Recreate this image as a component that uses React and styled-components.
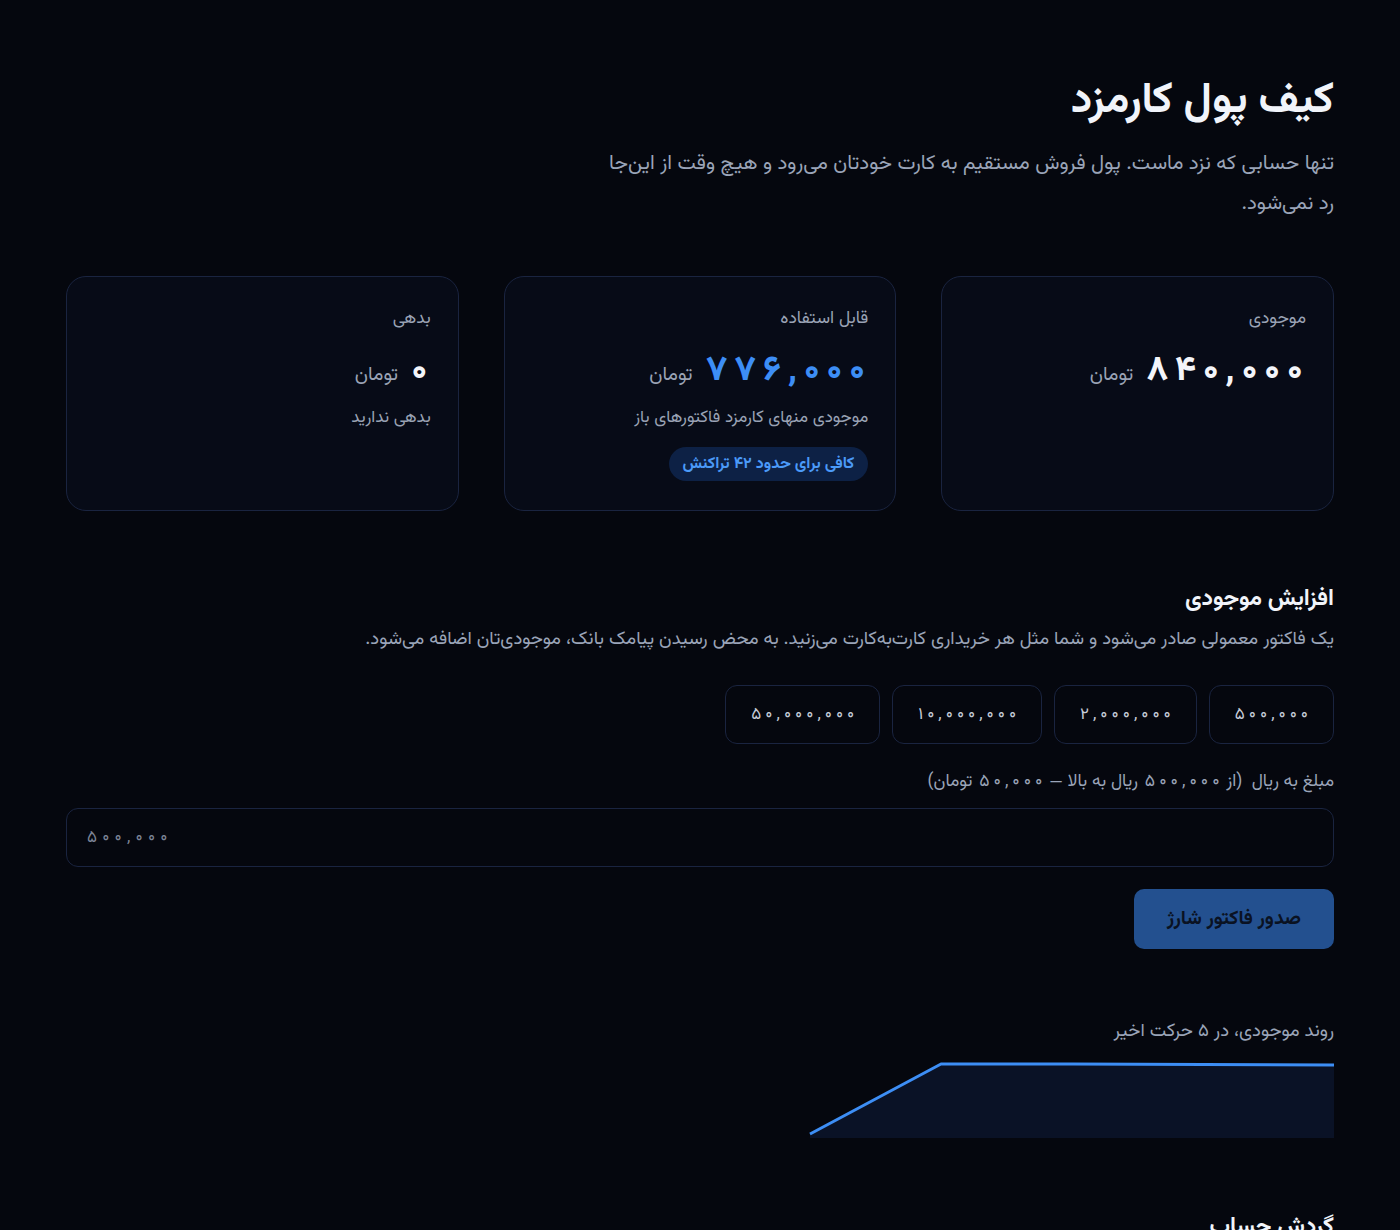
import React from "react";
import styled, { createGlobalStyle } from "styled-components";

const Global = createGlobalStyle`
  html, body { margin: 0; padding: 0; background: #05070e; }
  body {
    font-family: "Vazirmatn", "Noto Sans Arabic", "DejaVu Sans", "Noto Sans", sans-serif;
    color: #e8ecf4;
  }
  * { box-sizing: border-box; }
`;

const Page = styled.div`
  direction: rtl;
  width: 1268px;
  margin: 0 auto;
  padding-top: 76px;
  min-height: 1230px;
`;

const Title = styled.h1`
  margin: 0;
  font-size: 43px;
  font-weight: 700;
  color: #f1f4fa;
  line-height: 52px;
`;

const Lead = styled.p`
  margin: 16px 0 0;
  max-width: 745px;
  font-size: 20.5px;
  line-height: 40px;
  color: #9aa4b8;
`;

const Cards = styled.div`
  display: grid;
  grid-template-columns: repeat(3, 1fr);
  gap: 45px;
  margin-top: 52px;
`;

const Card = styled.div`
  background: #070b17;
  border: 1px solid #1a2440;
  border-radius: 20px;
  padding: 29px 27px 28px;
  min-height: 235px;
  display: flex;
  flex-direction: column;
  align-items: flex-start;
`;

const CardLabel = styled.div`
  font-size: 17.5px;
  color: #9aa3b5;
  line-height: 26px;
`;

const ValueRow = styled.div`
  display: flex;
  align-items: baseline;
  gap: 10px;
  margin-top: 18px;
  line-height: 44px;
`;

const Amount = styled.span`
  font-size: 35px;
  font-weight: 800;
  color: ${(p) => (p.$accent ? "#3d8ef5" : "#f3f5fa")};
`;

const Unit = styled.span`
  font-size: 19.5px;
  color: #9aa3b5;
`;

const CardNote = styled.div`
  margin-top: 8px;
  font-size: 17px;
  line-height: 26px;
  color: #9aa3b5;
`;

const Pill = styled.div`
  margin-top: 16px;
  height: 34px;
  padding: 0 14px;
  display: flex;
  align-items: center;
  border-radius: 999px;
  background: #0d2145;
  color: #4b9af8;
  font-size: 16px;
  font-weight: 700;
`;

const Ch = styled.span`
  display: inline-block;
  margin: 0 ${(p) => p.$gap / 2}px;
`;

const NumWrap = styled.span`
  unicode-bidi: isolate;
  white-space: nowrap;
`;

function Num({ children, gap = 4 }) {
  return (
    <NumWrap dir="ltr">
      {[...children].map((c, i) => (
        <Ch key={i} $gap={gap}>
          {c}
        </Ch>
      ))}
    </NumWrap>
  );
}

const Section = styled.section`
  margin-top: 71px;
`;

const SectionTitle = styled.h2`
  margin: 0;
  font-size: 23px;
  font-weight: 700;
  color: #f1f4fa;
  line-height: 34px;
`;

const SectionText = styled.p`
  margin: 9px 0 0;
  font-size: 18.5px;
  line-height: 30px;
  color: #9aa4b8;
`;

const Chips = styled.div`
  display: flex;
  gap: 12px;
  margin-top: 30px;
`;

const Chip = styled.button`
  height: 59px;
  padding: 0 23px;
  border-radius: 12px;
  border: 1px solid #1a2440;
  background: #05070e;
  color: #c6ccd8;
  font-family: inherit;
  font-size: 17px;
  cursor: pointer;
`;

const FieldLabel = styled.label`
  display: block;
  margin-top: 24px;
  font-size: 17.5px;
  line-height: 28px;
  color: #9aa4b8;
  white-space: pre;
`;

const Input = styled.input`
  display: block;
  width: 100%;
  height: 59px;
  margin-top: 12px;
  padding: 0 20px;
  direction: ltr;
  border-radius: 12px;
  border: 1px solid #1a2440;
  background: #05070e;
  color: #e8ecf4;
  font-family: inherit;
  font-size: 17px;
  outline: none;
  &::placeholder { color: #7c8496; }
`;

const Actions = styled.div`
  display: flex;
  margin-top: 22px;
`;

const Primary = styled.button`
  height: 60px;
  padding: 0 33px;
  border: none;
  border-radius: 10px;
  background: #23508f;
  color: #0a1222;
  font-family: inherit;
  font-size: 19.5px;
  font-weight: 700;
  cursor: pointer;
`;

const TrendLabel = styled.div`
  margin-top: 69px;
  font-size: 18.5px;
  line-height: 28px;
  color: #9aa4b8;
`;

const Chart = styled.svg`
  display: block;
  margin-top: 16px;
  width: 526px;
  height: 78px;
`;

const Bottom = styled.h2`
  margin: 70px 0 0;
  font-size: 23px;
  font-weight: 700;
  color: #f1f4fa;
  line-height: 34px;
`;

const chips = ["۵۰۰,۰۰۰", "۲,۰۰۰,۰۰۰", "۱۰,۰۰۰,۰۰۰", "۵۰,۰۰۰,۰۰۰"];
const T = "\u2009\u200A";

export default function App() {
  return (
    <>
      <Global />
      <Page>
        <Title>کیف پول کارمزد</Title>
        <Lead>
          تنها حسابی که نزد ماست. پول فروش مستقیم به کارت خودتان می‌رود و هیچ وقت از این‌جا رد نمی‌شود.
        </Lead>

        <Cards>
          <Card>
            <CardLabel>موجودی</CardLabel>
            <ValueRow>
              <Amount>
                <Num gap={7}>۸۴۰,۰۰۰</Num>
              </Amount>
              <Unit>تومان</Unit>
            </ValueRow>
          </Card>
          <Card>
            <CardLabel>قابل استفاده</CardLabel>
            <ValueRow>
              <Amount $accent>
                <Num gap={7}>۷۷۶,۰۰۰</Num>
              </Amount>
              <Unit>تومان</Unit>
            </ValueRow>
            <CardNote>موجودی منهای کارمزد فاکتورهای باز</CardNote>
            <Pill>کافی برای حدود ۴۲ تراکنش</Pill>
          </Card>
          <Card>
            <CardLabel>بدهی</CardLabel>
            <ValueRow>
              <Amount>
                <Num gap={7}>۰</Num>
              </Amount>
              <Unit>تومان</Unit>
            </ValueRow>
            <CardNote>بدهی ندارید</CardNote>
          </Card>
        </Cards>

        <Section>
          <SectionTitle>افزایش موجودی</SectionTitle>
          <SectionText>
            یک فاکتور معمولی صادر می‌شود و شما مثل هر خریداری کارت‌به‌کارت می‌زنید. به محض رسیدن پیامک بانک، موجودی‌تان اضافه می‌شود.
          </SectionText>
          <Chips>
            {chips.map((c) => (
              <Chip key={c}>
                <Num gap={4}>{c}</Num>
              </Chip>
            ))}
          </Chips>
          <FieldLabel>
            {"مبلغ به ریال  (از "}
            <Num gap={4}>۵۰۰,۰۰۰</Num>
            {" ریال به بالا — "}
            <Num gap={4}>۵۰,۰۰۰</Num>
            {" تومان)"}
          </FieldLabel>
          <Input placeholder={["۵", "۰", "۰", ",", "۰", "۰", "۰"].join(T)} />
          <Actions>
            <Primary>صدور فاکتور شارژ</Primary>
          </Actions>

          <TrendLabel>روند موجودی، در ۵ حرکت اخیر</TrendLabel>
          <Chart viewBox="0 0 526 78">
            <path d="M2 72 L133 2 L264 2 L395 2.5 L526 3 L526 76 L2 76 Z" fill="#0a1226" />
            <polyline
              points="2,72 133,2 264,2 395,2.5 526,3"
              fill="none"
              stroke="#3d8ef5"
              strokeWidth="3"
              strokeLinejoin="round"
            />
          </Chart>
        </Section>

        <Bottom>گردش حساب</Bottom>
      </Page>
    </>
  );
}
